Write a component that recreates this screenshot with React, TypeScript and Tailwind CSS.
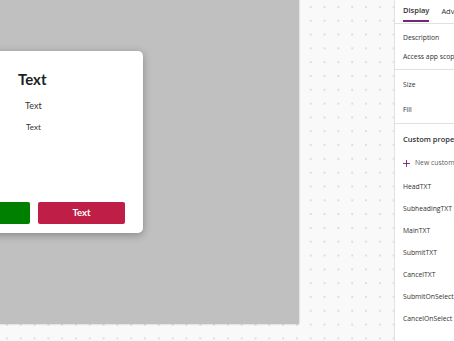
import React from 'react';

const rows = ['HeadTXT', 'SubheadingTXT', 'MainTXT', 'SubmitTXT', 'CancelTXT', 'SubmitOnSelect', 'CancelOnSelect'];

function Canvas() {
  return (
    <div className="relative w-[394px] h-[341px] overflow-hidden bg-[#f9f9f9] bg-[radial-gradient(circle,#d6d6d6_0.6px,transparent_1px)] bg-[length:13.82px_13.82px]">
      <div className="w-[299px] h-[324px] overflow-hidden bg-[#c0c0c0] shadow-[0_0_2px_rgba(0,0,0,0.25)] pt-[51px]">
        <div className="ml-[-75px] w-[218px] h-[182px] bg-white rounded-[5px] shadow-[0_2px_8px_rgba(0,0,0,0.3)] flex flex-col font-['Lato',sans-serif]">
          <div className="pl-[93px] pt-[19px] text-[15px] leading-[18px] font-bold text-[#201f1e]">Text</div>
          <div className="pl-[100px] mt-[12px] text-[9px] leading-[11px] text-[#333]">Text</div>
          <div className="pl-[101px] mt-[11px] text-[8px] leading-[10px] text-[#333]">Text</div>
          <div className="mt-auto mb-[9px] pl-[18px] flex gap-[8px]">
            <div className="w-[87px] h-[22px] rounded-[2px] bg-[#008000]" />
            <div className="w-[87px] h-[22px] rounded-[2px] bg-[#bf1e46] flex items-center justify-center text-white text-[9.5px] font-bold">Text</div>
          </div>
        </div>
      </div>
    </div>
  );
}

function Panel() {
  const row = 'h-[22px] flex items-center';
  return (
    <div className="w-[60px] h-[341px] overflow-hidden bg-white border-l border-[#e1e1e1] font-['Open_Sans',sans-serif] text-[#323130] text-[6.8px] whitespace-nowrap">
      <div className="h-[24px] border-b border-[#e1e1e1] flex items-center gap-[12px] pl-[8px]">
        <div className="relative text-[7.5px] font-semibold pb-[1px]">
          Display
          <div className="absolute left-0 right-0 top-[14.5px] h-[2px] bg-[#742774]" />
        </div>
        <div className="text-[7.5px]">Advanced</div>
      </div>
      <div className="pl-[8px]">
        <div className="h-[4px]" />
        <div className="h-[20px] flex items-center">Description</div>
        <div className="h-[18px] flex items-center">Access app scope</div>
        <div className="h-[3px]" />
      </div>
      <div className="h-px bg-[#e1e1e1]" />
      <div className="pl-[8px]">
        <div className="h-[30px] flex items-center">Size</div>
        <div className="h-[20px] flex items-center">Fill</div>
        <div className="h-[3px]" />
      </div>
      <div className="h-px bg-[#e1e1e1]" />
      <div className="pl-[8px]">
        <div className="h-[32px] flex items-center text-[7.5px] font-semibold">Custom properties</div>
        <div className="h-[14px] flex items-center gap-[5px]">
          <svg width="7" height="7" viewBox="0 0 7 7" className="shrink-0">
            <path d="M3.5 0v7M0 3.5h7" stroke="#742774" strokeWidth="0.9" />
          </svg>
          <span className="text-[#605e5c]">New custom property</span>
        </div>
        <div className="h-[6px]" />
        {rows.map((r) => (
          <div key={r} className={row}>{r}</div>
        ))}
      </div>
    </div>
  );
}

export default function App() {
  return (
    <div className="flex w-[454px] h-[341px] overflow-hidden">
      <Canvas />
      <Panel />
    </div>
  );
}
